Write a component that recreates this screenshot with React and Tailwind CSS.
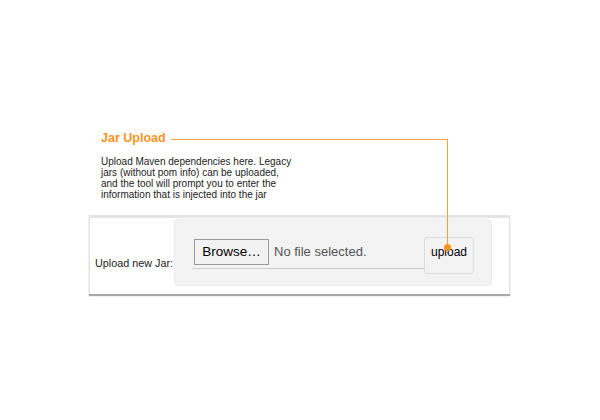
import React from "react";

function App() {
  return (
    <div className="relative w-[600px] h-[420px] bg-white font-['Liberation_Sans',Arial,sans-serif]">
      <div className="pt-[130px] pl-[89px]">
        <div className="pl-[12px]">
          <h2 className="text-[12.5px] leading-[16px] font-bold text-[#f7941e]">Jar Upload</h2>
          <p className="mt-[10px] text-[10px] leading-[11px] text-[#222]">
            Upload Maven dependencies here. Legacy
            <br />
            jars (without pom info) can be uploaded,
            <br />
            and the tool will prompt you to enter the
            <br />
            information that is injected into the jar
          </p>
        </div>

        <div className="mt-[15px] w-[421px] h-[79px] bg-white border-t-[3px] border-x border-[#e4e4e4] shadow-[0_2px_1px_#a8a8a8] flex items-start">
          <div className="w-[84px] pl-[5px] mt-[39px] text-[10.8px] leading-[12px] text-[#222] whitespace-nowrap">
            Upload new Jar:
          </div>
          <div className="mt-[1px] w-[318px] h-[67px] rounded-[4px] bg-[#f3f3f3] border border-[#ececec] flex items-start pt-[17px] pl-[17px]">
            <div className="mt-[2px] w-[232px] h-[30px] border-b border-[#cfcfcf] flex items-start pl-[2px]">
              <button className="h-[26px] w-[75px] bg-[#f2f2f2] border border-[#9a9a9a] text-[13.5px] text-black">
                Browse…
              </button>
              <span className="ml-[5px] leading-[26px] text-[13px] text-[#555]">No file selected.</span>
            </div>
            <button className="h-[37px] w-[50px] rounded-[3px] border border-[#dcdcdc] bg-[#f3f3f3] text-[12px] text-black pb-[8px]">
              upload
            </button>
          </div>
        </div>
      </div>

      <div className="absolute left-[171px] top-[139px] w-[276px] h-px bg-[#f3a03a]" />
      <div className="absolute left-[447px] top-[139px] w-px h-[108px] bg-[#f3a03a]" />
      <div className="absolute left-[444px] top-[244px] w-[7px] h-[7px] rounded-full bg-[#f7941e]" />
    </div>
  );
}

export default App;
